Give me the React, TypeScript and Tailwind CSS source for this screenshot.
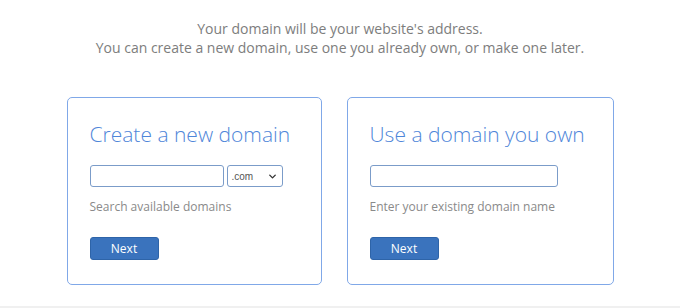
import { ChevronDown } from 'lucide-react'

function DomainCard({
  title,
  hint,
  width,
  inputWidth,
  withSelect,
}: {
  title: string
  hint: string
  width: string
  inputWidth: string
  withSelect?: boolean
}) {
  return (
    <div className={`${width} h-[188px] border border-[#80a8e8] rounded-[5px] pl-[22px] pt-[21px]`}>
      <h2 className="text-[21px] leading-[30px] font-light text-[#4f86d9] whitespace-nowrap">{title}</h2>
      <div className="mt-[16px] flex gap-[3px]">
        <input
          type="text"
          className={`${inputWidth} h-[22px] border border-[#7b9cc9] rounded-[3px] bg-white outline-none`}
        />
        {withSelect && (
          <div className="w-[56px] h-[22px] border border-[#7b9cc9] rounded-[3px] flex items-center justify-between pl-[4px] pr-[4px]">
            <span className="text-[10px] text-[#555] font-['Liberation_Sans',sans-serif]">.com</span>
            <ChevronDown size={11} strokeWidth={3} className="text-[#333]" />
          </div>
        )}
      </div>
      <p className="mt-[12px] text-[12px] leading-[16px] text-[#8a8a8a]">{hint}</p>
      <button className="mt-[22px] w-[69px] h-[23px] rounded-[3px] bg-[#3a73bd] border border-[#2e64a8] text-white text-[12px] leading-none">
        Next
      </button>
    </div>
  )
}

export default function App() {
  return (
    <div className="w-[680px] h-[308px] bg-white flex flex-col items-center border-b-2 border-[#f0f0f0] font-['Open_Sans',sans-serif]">
      <p className="mt-[19px] text-center text-[14px] leading-[19px] text-[#7d7d7d]">
        Your domain will be your website's address.
        <br />
        You can create a new domain, use one you already own, or make one later.
      </p>
      <div className="mt-[40px] flex gap-[25px]">
        <DomainCard
          title="Create a new domain"
          hint="Search available domains"
          width="w-[255px]"
          inputWidth="w-[134px]"
          withSelect
        />
        <DomainCard
          title="Use a domain you own"
          hint="Enter your existing domain name"
          width="w-[267px]"
          inputWidth="w-[188px]"
        />
      </div>
    </div>
  )
}
